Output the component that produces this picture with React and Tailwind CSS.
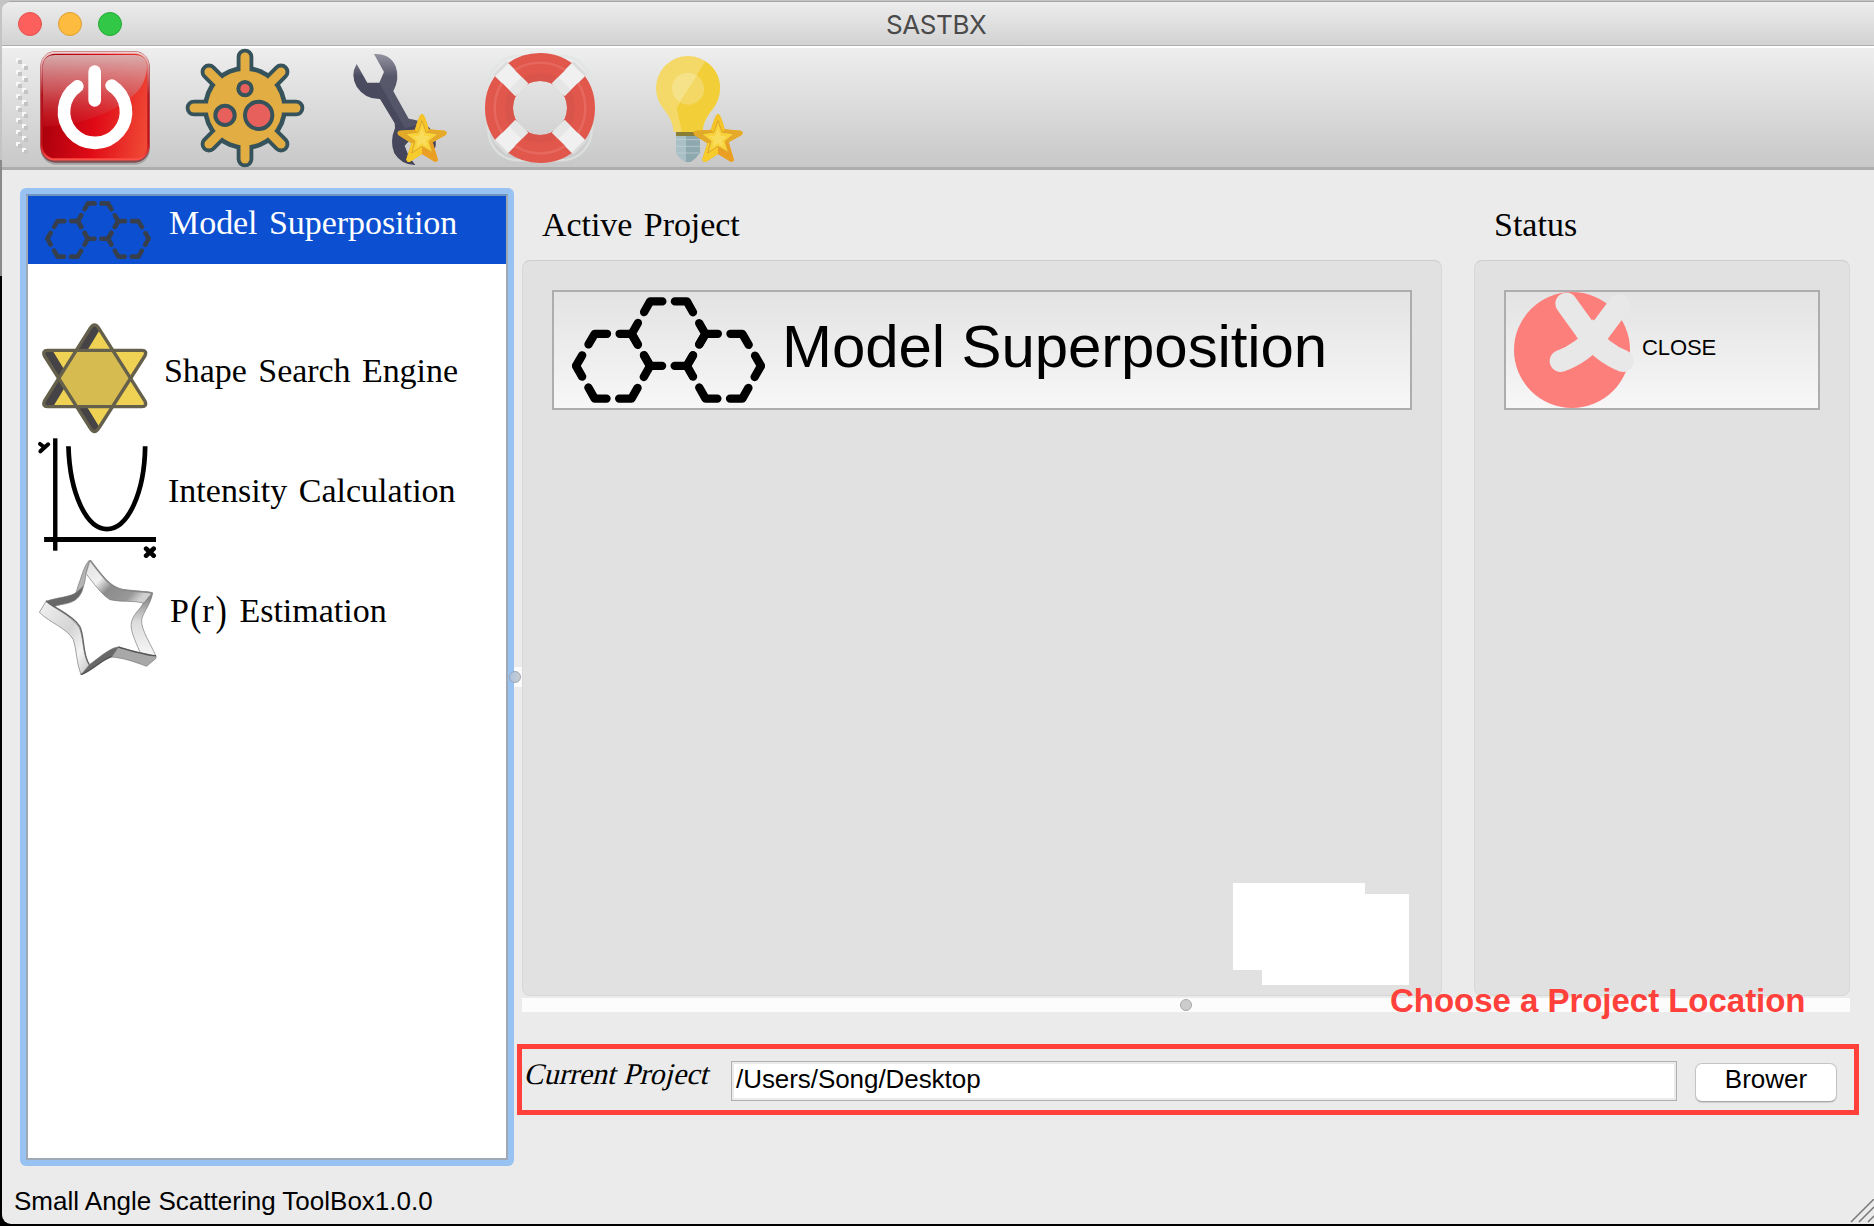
import React from "react";

const HEXES = [
  "420,334 530,334 585,431 530,527 420,527 365,431",
  "254,431 364,431 420,527 364,625 254,625 198,527",
  "586,431 696,431 752,527 696,625 586,625 530,527",
];

function Hexagons({ className }) {
  return (
    <svg viewBox="186 321 578 317" className={className} fill="none" stroke="currentColor" strokeWidth="25" strokeLinecap="round" strokeLinejoin="round">
      {HEXES.map((p) => (
        <polygon key={p} points={p} pathLength="600" strokeDasharray="66 34" strokeDashoffset="33" />
      ))}
    </svg>
  );
}

function PowerIcon() {
  return (
    <svg viewBox="114 144 342 357" className="h-[119px] w-[114px]">
      <defs>
        <linearGradient id="pw" x1="0" y1="0.6" x2="1" y2="0.75">
          <stop offset="0" stopColor="#a8000c" />
          <stop offset="0.5" stopColor="#e00a16" />
          <stop offset="1" stopColor="#f04a36" />
        </linearGradient>
        <linearGradient id="gloss" x1="0" y1="0" x2="0" y2="1">
          <stop offset="0" stopColor="#d8b4b4" stopOpacity="0.95" />
          <stop offset="0.5" stopColor="#d66a6c" stopOpacity="0.75" />
          <stop offset="1" stopColor="#d01820" stopOpacity="0.35" />
        </linearGradient>
        <linearGradient id="rim" x1="0" y1="0" x2="0" y2="1">
          <stop offset="0" stopColor="#ecd0d0" />
          <stop offset="0.4" stopColor="#b01820" />
          <stop offset="0.85" stopColor="#c01018" />
          <stop offset="1" stopColor="#ff5048" />
        </linearGradient>
      </defs>
      <rect x="122" y="158" width="328" height="336" rx="46" fill="#000" opacity="0.18" />
      <rect x="122" y="158" width="326" height="330" rx="44" fill="#6c1018" opacity="0.6" />
      <rect x="121" y="154" width="328" height="328" rx="44" fill="#b8484e" />
      <rect x="125" y="158" width="320" height="320" rx="40" fill="url(#pw)" stroke="url(#rim)" strokeWidth="6" />
      <path d="M129 380V200Q129 165 166 165H404Q441 165 441 200Q438 260 392 292Q290 375 129 380Z" fill="url(#gloss)" />
      <g fill="none" stroke="#fff" strokeWidth="38" strokeLinecap="round">
        <path d="M284 215V301" />
        <path d="M232 259A93 93 0 1 0 335 257" />
      </g>
    </svg>
  );
}

function VirusIcon() {
  const angles = [0, 45, 90, 135, 180, 225, 270, 315];
  const arms = angles.map((a) => <line key={a} x1="735" y1="324" x2="735" y2="171" transform={`rotate(${a} 735 324)`} />);
  return (
    <svg viewBox="552 144 366 360" className="h-[120px] w-[122px]">
      <g stroke="#36525a" strokeWidth="50" strokeLinecap="round">{arms}</g>
      <circle cx="735" cy="324" r="126" fill="#36525a" />
      <circle cx="735" cy="324" r="112" fill="#e2ad42" />
      <g stroke="#e2ad42" strokeWidth="27" strokeLinecap="round">{arms}</g>
      <g fill="#e8605c" stroke="#36525a" strokeWidth="12">
        <circle cx="735" cy="266" r="20" />
        <circle cx="675" cy="346" r="29" />
        <circle cx="776" cy="346" r="41" />
      </g>
    </svg>
  );
}

function Star() {
  return (
    <g>
      <path d="M276 342Q284 342 296 388L345 392Q354 397 347 405L308 427L324 480Q322 487 314 485L276 462L240 485Q230 488 229 478L244 430L205 405Q199 395 209 392L255 389Q268 342 276 342Z" fill="#f0b020" />
      <path d="M276 342Q284 342 296 388L276 425L255 389Q268 342 276 342Z" fill="#f5c428" />
      <path d="M345 392Q354 397 347 405L308 427L276 425L296 388Z" fill="#e6aa2a" />
      <path d="M205 405Q199 395 209 392L255 389L276 425L244 430Z" fill="#e3a928" />
      <path d="M308 427L324 480Q322 487 314 485L276 462L276 425Z" fill="#ea9f24" />
      <path d="M276 462L240 485Q230 488 229 478L244 430L276 425Z" fill="#f7cb2c" />
      <path d="M276 362L288 397L325 401L297 424L308 458L276 439L245 459L255 424L226 401L264 397Z" fill="#f8d33c" stroke="#dca52a" strokeWidth="3" strokeLinejoin="round" />
      <path d="M276 385L285 408L303 409L288 421L293 440L276 430L259 440L264 421L248 409L267 408Z" fill="#f9dc5c" />
    </g>
  );
}

function WrenchIcon() {
  return (
    <svg viewBox="60 144 294 357" className="h-[119px] w-[98px]">
      <defs>
        <linearGradient id="wr" x1="0" y1="0" x2="0" y2="1">
          <stop offset="0" stopColor="#8c8a98" />
          <stop offset="0.1" stopColor="#6e6d7e" />
          <stop offset="0.2" stopColor="#4c4c60" />
          <stop offset="1" stopColor="#44445a" />
        </linearGradient>
      </defs>
      <path d="M132 162Q180 160 197 199Q210 235 190 274L236 356Q290 362 310 400Q322 425 315 445L290 440L240 420L224 437L236 468L256 495Q215 496 193 460Q178 425 195 384L194 370L150 297Q105 298 80 260Q60 225 80 192L112 248H148L162 216Z" fill="url(#wr)" />
      <path d="M132 162Q180 160 197 199Q210 235 190 274L236 356Q265 358 285 370L225 385L160 270L148 248L162 216Z" fill="#fff" opacity="0.07" />
      <Star />
    </svg>
  );
}

function BuoyIcon() {
  return (
    <svg viewBox="456 144 348 357" className="h-[119px] w-[116px]">
      <rect x="475" y="168" width="310" height="313" rx="90" fill="none" stroke="#dfe5e4" strokeWidth="7" opacity="0.75" />
      <circle cx="630" cy="324" r="123" fill="none" stroke="#e2574c" strokeWidth="84" />
      <circle cx="630" cy="324" r="93" fill="none" stroke="#d9544a" strokeWidth="24" />
      <circle cx="630" cy="324" r="136" fill="none" stroke="#e6685f" strokeWidth="7" />
      {[45, 135, 225, 315].map((a) => (
        <g key={a} transform={`rotate(${a} 630 324)`}>
          <path d="M602 154H658V190H602Z" fill="#dbdcdb" />
          <rect x="603" y="162" width="54" height="84" fill="#f0f0f0" />
          <rect x="603" y="219" width="54" height="27" fill="#e6e6e6" />
        </g>
      ))}
    </svg>
  );
}

function BulbIcon() {
  return (
    <svg viewBox="972 144 270 357" className="h-[119px] w-[90px]">
      <path d="M1038 394H1110V458Q1098 476 1082 486H1066Q1048 476 1038 458Z" fill="#a9c0c6" />
      <path d="M1068 394H1110V458Q1098 476 1082 486H1068Z" fill="#8da8ae" />
      <path d="M1038 419H1110M1038 439H1110M1038 459H1108" stroke="#c3d3d6" strokeWidth="3" opacity="0.7" />
      <path d="M1038 396H1110V408H1038Z" fill="#8a7d35" />
      <path d="M1031 396Q1028 360 1003 330Q978 300 978 264A96 96 0 0 1 1170 264Q1170 300 1146 330Q1120 360 1117 396Z" fill="#f4d968" />
      <path d="M1126 184Q1170 214 1170 264Q1170 300 1146 330Q1120 360 1117 396H1056L1040 325Z" fill="#f2cf38" />
      <circle cx="1073" cy="265" r="47" fill="#f7e596" opacity="0.7" />
      <path d="M1101 227A47 47 0 0 1 1049 306Z" fill="#f3d866" />
      <g transform="translate(888 0)"><Star /></g>
    </svg>
  );
}

function HexagramIcon() {
  const up = "M268 474Q281 453 294 474L431 692Q438 708 422 708H141Q126 708 132 692Z";
  const down = "M268 772Q281 794 294 772L431 556Q438 540 422 540H141Q126 540 132 556Z";
  return (
    <svg viewBox="122 458 318 332" preserveAspectRatio="none" className="h-[111px] w-[107px]">
      <path d={up} fill="#efd254" />
      <path d={down} fill="#efd254" />
      <path d="M268 474Q281 460 294 474L295 481L161 703L141 708Q126 708 132 692Z" fill="#454346" />
      <path d="M268 772Q281 786 294 772L294 767L159 545L141 540Q126 540 132 556Z" fill="#454346" />
      <path d="M228 540H336L386 624L336 708H228L178 624Z" fill="#d6bb50" />
      <g fill="none" stroke="#65604c" strokeWidth="10" strokeLinejoin="round">
        <path d={up} />
        <path d={down} />
      </g>
    </svg>
  );
}

function ParabolaIcon() {
  return (
    <svg viewBox="109 50 355 364" preserveAspectRatio="none" className="h-[121px] w-[120px]" fill="none" stroke="#000">
      <path d="M163 54V392" strokeWidth="13" />
      <path d="M130 358H461" strokeWidth="15" />
      <path d="M202 78C206 220 255 327 316 327S427 220 429 78" strokeWidth="14" />
      <path d="M118 71L130 80M142 72L119 93" strokeWidth="12" strokeLinecap="round" />
      <path d="M432 386L454 407M454 386L432 407" strokeWidth="14" strokeLinecap="round" />
    </svg>
  );
}

function CutterIcon() {
  return (
    <svg viewBox="24 28 360 354" className="h-[118px] w-[120px]" strokeLinejoin="round">
      <defs>
        <linearGradient id="ca" x1="0" y1="0" x2="1" y2="0.6">
          <stop offset="0" stopColor="#e2e2e2" />
          <stop offset="0.35" stopColor="#f0f0f0" />
          <stop offset="0.55" stopColor="#8c8c8c" />
          <stop offset="0.85" stopColor="#989898" />
          <stop offset="1" stopColor="#d0d0d0" />
        </linearGradient>
        <linearGradient id="cd" x1="0" y1="0" x2="1" y2="1">
          <stop offset="0" stopColor="#f2f2f2" />
          <stop offset="0.5" stopColor="#d4d4d4" />
          <stop offset="0.75" stopColor="#f4f4f4" />
          <stop offset="1" stopColor="#c4c4c4" />
        </linearGradient>
        <linearGradient id="cg" x1="0" y1="0" x2="0" y2="1">
          <stop offset="0" stopColor="#777" />
          <stop offset="0.45" stopColor="#dcdcdc" />
          <stop offset="1" stopColor="#f8f8f8" />
        </linearGradient>
      </defs>
      <g stroke="#777" strokeWidth="2">
        <path d="M178 32C162 48 155 80 148 98C142 112 142 124 134 135C158 126 164 108 168 72Z" fill="#b4b4b4" />
        <path d="M48 155C85 142 122 142 140 128L160 110C156 136 140 152 122 158C105 165 84 164 70 173Z" fill="#686868" />
        <path d="M368 130C362 165 338 190 335 210C332 240 364 285 378 320L330 308C315 270 298 240 305 215C312 190 330 180 340 160Z" fill="url(#cg)" />
        <path d="M180 32C215 75 235 108 270 118C300 126 340 124 366 130L342 160C310 152 270 158 240 150C215 135 190 100 168 72Z" fill="url(#ca)" />
        <path d="M265 292C300 300 340 315 378 318V326L350 350C310 335 280 325 245 322Z" fill="#a8a8a8" />
        <path d="M178 345C200 330 240 293 265 292L245 322C215 330 180 365 153 375Z" fill="#686868" />
        <path d="M48 155C70 175 120 195 145 230C162 255 155 310 178 345L153 375C140 345 140 300 130 270C110 235 60 220 28 188Z" fill="url(#cd)" />
      </g>
      <path d="M48 153C70 175 125 192 149 230C165 260 156 315 178 345" fill="none" stroke="#666" strokeWidth="4" />
      <path d="M153 375C190 360 215 330 245 320M378 318C350 318 300 302 265 292" fill="none" stroke="#555" strokeWidth="4" />
      <path d="M180 32C215 75 235 108 270 118C300 126 340 124 368 130" fill="none" stroke="#888" strokeWidth="5" />
    </svg>
  );
}

function CloseIcon() {
  return (
    <svg viewBox="222 306 363 348" className="h-[116px] w-[121px]">
      <circle cx="396" cy="480" r="174" fill="#fc7f7b" />
      <path d="M458 388L506 440L457 492L408 438Z" fill="#e8e8e8" />
      <g fill="none" stroke="#e8e8e8" strokeWidth="66" strokeLinecap="round">
        <path d="M379 341L444 431Q486 488 549 513" />
        <path d="M538 345L472 433Q429 488 362 513" />
      </g>
    </svg>
  );
}

function Grip() {
  return (
    <svg viewBox="0 0 13 96" className="mt-[10px] h-[96px] w-[13px]">
      {Array.from({ length: 16 }, (_, i) => (
        <g key={i} transform={`translate(${i % 2 ? 6 : 0} ${i * 6})`}>
          <path d="M0 0H4V2H2V4H0Z" fill="#f8f8f8" />
          <path d="M2 2H6V6H2Z" fill="#c4c4c4" />
        </g>
      ))}
    </svg>
  );
}

const SERIF = "font-['Liberation_Serif',serif]";
const SANS = "font-['Liberation_Sans',sans-serif]";

export default function App() {
  return (
    <div className={`relative flex h-[1226px] w-[1874px] flex-col overflow-hidden bg-[linear-gradient(#c4c4c4_0_160px,#8a8a8a_160px_276px,#000_276px)] text-black ${SANS}`}>
      <div className="ml-[2px] mt-px flex h-[1223px] flex-col overflow-hidden rounded-l-[9px] border-t border-[#a5a5a5] bg-[#ebebeb]">
        <header className="flex h-[44px] shrink-0 items-start border-b border-[#adadad] bg-linear-to-b from-[#ededed] to-[#d2d2d2]">
          <div className="flex gap-4 pl-4 pt-[10px]">
            <i className="size-6 rounded-full border border-[#e2544f] bg-[#fd605c]" />
            <i className="size-6 rounded-full border border-[#dda034] bg-[#fdbc40]" />
            <i className="size-6 rounded-full border border-[#25a935] bg-[#33c748]" />
          </div>
          <h1 className="ml-[764px] whitespace-nowrap pt-[7px] font-['Inter',sans-serif] text-[26px] leading-[32px] tracking-[-0.4px] text-[#4a4a4a]">SASTBX</h1>
        </header>

        <nav className="flex h-[124px] shrink-0 items-start border-b-[3px] border-t-2 border-b-[#adadad] border-t-white bg-linear-to-b from-[#eeeeee] to-[#c8c8c8] pl-[14px]">
          <Grip />
          <span className="ml-[9px]"><PowerIcon /></span>
          <span className="ml-8"><VirusIcon /></span>
          <span className="ml-11"><WrenchIcon /></span>
          <span className="ml-[34px]"><BuoyIcon /></span>
          <span className="ml-14"><BulbIcon /></span>
        </nav>

        <main className="flex h-[1000px] shrink-0">
          <aside className="ml-[18px] mt-[18px] h-[978px] w-[494px] shrink-0 rounded-[6px] bg-[#97c2f1] p-[6px]">
            <ul className={`h-full border-2 border-[#9fa9b5] border-t-[#7095c0] bg-white text-[34px] leading-[40px] ${SERIF}`}>
              <li className="flex h-[68px] bg-[#0c50d1] text-white">
                <Hexagons className="ml-[17px] mt-[5px] h-[58px] w-[106px] text-[#373f4c]" />
                <span className="ml-[18px] mt-[7px] whitespace-nowrap tracking-[-0.05px] [word-spacing:3px]">Model Superposition</span>
              </li>
              <li className="mt-[59px] flex h-[111px]">
                <span className="ml-[13px]"><HexagramIcon /></span>
                <span className="ml-[16px] mt-[28px] whitespace-nowrap tracking-[-0.05px] [word-spacing:3px]">Shape Search Engine</span>
              </li>
              <li className="mt-[3px] flex h-[121px]">
                <span className="ml-[9px]"><ParabolaIcon /></span>
                <span className="ml-[11px] mt-[34px] whitespace-nowrap tracking-[0.02px] [word-spacing:3px]">Intensity Calculation</span>
              </li>
              <li className="mt-px flex h-[118px]">
                <span className="ml-[10px]"><CutterIcon /></span>
                <span className="ml-[12px] mt-[32px] whitespace-nowrap [word-spacing:3px]">P<span className="mx-px inline-block scale-y-[1.25]">(</span>r<span className="ml-[2px] mr-px inline-block scale-y-[1.25]">)</span> Estimation</span>
              </li>
            </ul>
          </aside>

          <section className="relative ml-[2px] flex w-[1345px] flex-col">
            <div className="flex h-[828px] pl-[6px]">
              <div className="w-[920px]">
                <h2 className={`h-[90px] pl-[20px] pt-[35px] text-[34px] leading-[40px] tracking-[-0.05px] [word-spacing:3px] ${SERIF}`}>Active Project</h2>
                <div className="relative h-[736px] rounded-lg border border-[#d8d8d8] border-t-[#cdcdcd] bg-[#e1e1e1] px-[29px] pt-[29px]">
                  <button className="flex h-[120px] w-[860px] border-2 border-[#adadad] bg-linear-to-b from-[#e3e3e3] to-[#f7f7f7] text-[60px] leading-[70px]">
                    <Hexagons className="ml-[18px] mt-[5px] h-[106px] w-[193px]" />
                    <span className="ml-[17px] mt-[20px] whitespace-nowrap tracking-[-0.1px]">Model Superposition</span>
                  </button>
                  <i className="absolute left-[710px] top-[622px] h-[87px] w-[132px] bg-white" />
                  <i className="absolute left-[739px] top-[633px] h-[91px] w-[147px] bg-white" />
                </div>
              </div>
              <div className="ml-8 w-[376px]">
                <h2 className={`h-[90px] pl-[20px] pt-[35px] text-[34px] leading-[40px] ${SERIF}`}>Status</h2>
                <div className="h-[736px] rounded-lg border border-[#d8d8d8] border-t-[#cdcdcd] bg-[#e1e1e1] px-[29px] pt-[29px]">
                  <button className="flex h-[120px] w-[316px] border-2 border-[#adadad] bg-linear-to-b from-[#e3e3e3] to-[#f7f7f7] text-[22px] leading-[26px]">
                    <span className="ml-2"><CloseIcon /></span>
                    <span className="ml-[7px] mt-[43px] tracking-[-0.1px]">CLOSE</span>
                  </button>
                </div>
              </div>
            </div>
            <div className="ml-[6px] flex h-[14px] w-[1328px] items-center bg-[#fcfcfc] pl-[658px]">
              <i className="size-3 rounded-full border border-[#a8a8a8] bg-[#cccccc]" />
            </div>
            <div className="ml-px mt-8 flex h-[71px] w-[1342px] border-[5px] border-[#ff403b]">
              <span className={`ml-[2px] mt-[5px] w-[207px] -skew-x-[14deg] whitespace-nowrap text-[30px] leading-[40px] ${SERIF}`}>Current Project</span>
              <div className="mt-3 h-[40px] w-[946px] border border-[#b0b0b0] bg-[#ebebeb] p-[2px]">
                <div className="h-full whitespace-nowrap bg-white pl-[2px] text-[26px] leading-[30px] tracking-[-0.06px]">/Users/Song/Desktop</div>
              </div>
              <button className="ml-[18px] mt-[14px] flex h-[39px] w-[142px] justify-center rounded-[7px] border border-[#c4c4c4] border-b-[#a8a8a8] bg-white text-[26px] leading-[30px] shadow-[0_1px_1px_rgba(0,0,0,0.12)]">Brower</button>
            </div>
            <span className="absolute left-[874px] top-[812px] whitespace-nowrap text-[33px] font-bold leading-[38px] tracking-[-0.03px] text-[#ff403b]">Choose a Project Location</span>
            <i className="absolute -left-[8px] top-[497px] flex h-[20px] w-[14px] items-center justify-center bg-[linear-gradient(90deg,#97c2f1_6px,#fbfbfb_6px)]">
              <i className="size-3 rounded-full border border-[#9ba5b3] bg-linear-to-r from-[#a9c4e4] to-[#cccccc]" />
            </i>
          </section>
        </main>

        <footer className="flex h-[54px] justify-between pl-[12px]">
          <span className="mt-[15px] whitespace-nowrap text-[26px] leading-[32px]">Small Angle Scattering ToolBox1.0.0</span>
          <svg viewBox="0 0 24 24" className="mt-[29px] size-6" stroke="#777" strokeWidth="1.5">
            <path d="M1 23L24 0M9 23L24 8M18 23L24 17" />
          </svg>
        </footer>
      </div>
    </div>
  );
}
